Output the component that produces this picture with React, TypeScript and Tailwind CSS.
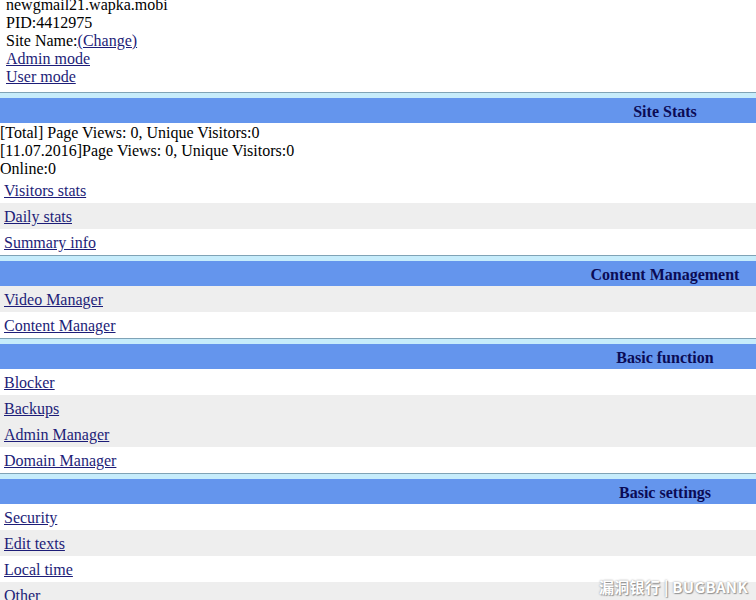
import React from 'react'

const serif = { fontFamily: '"Liberation Serif", "Times New Roman", serif' }

type Row = { label: string; gray?: boolean }

function Header({ title }: { title: string }) {
  return (
    <div>
      <div className="h-px bg-[#7fa3b6]" />
      <div className="h-[5px] bg-[#c6ecfb]" />
      <div className="h-[25px] bg-[#6495ed] flex items-center justify-end pt-[2px]">
        <div className="w-[182px] text-center font-bold text-[16px] text-[#0b0b55]">{title}</div>
      </div>
    </div>
  )
}

function Rows({ rows }: { rows: Row[] }) {
  return (
    <div>
      {rows.map((r) => (
        <div
          key={r.label}
          className={`h-[26px] flex items-center pl-1 pt-[2px] ${r.gray ? 'bg-[#eeeeee]' : 'bg-white'}`}
        >
          <a href="#" className="text-[#1d1d78] underline leading-[18px]">
            {r.label}
          </a>
        </div>
      ))}
    </div>
  )
}

export default function App() {
  return (
    <div className="relative w-[756px] h-[600px] overflow-hidden bg-white text-[16px] text-black" style={serif}>
      {/* site info */}
      <div className="-mt-[4px] mb-[6px] pl-[6px] leading-[18px]">
        <div>newgmail21.wapka.mobi</div>
        <div>PID:4412975</div>
        <div>
          Site Name:
          <a href="#" className="text-[#1d1d78] underline">(Change)</a>
        </div>
        <div>
          <a href="#" className="text-[#1d1d78] underline">Admin mode</a>
        </div>
        <div>
          <a href="#" className="text-[#1d1d78] underline">User mode</a>
        </div>
      </div>

      <Header title="Site Stats" />
      <div className="leading-[18px] pt-px -mb-px">
        <div>[Total] Page Views: 0, Unique Visitors:0</div>
        <div>[11.07.2016]Page Views: 0, Unique Visitors:0</div>
        <div>Online:0</div>
      </div>
      <Rows rows={[{ label: 'Visitors stats' }, { label: 'Daily stats', gray: true }, { label: 'Summary info' }]} />

      <Header title="Content Management" />
      <Rows rows={[{ label: 'Video Manager', gray: true }, { label: 'Content Manager' }]} />

      <Header title="Basic function" />
      <Rows
        rows={[
          { label: 'Blocker' },
          { label: 'Backups', gray: true },
          { label: 'Admin Manager', gray: true },
          { label: 'Domain Manager' },
        ]}
      />

      <Header title="Basic settings" />
      <Rows
        rows={[
          { label: 'Security' },
          { label: 'Edit texts', gray: true },
          { label: 'Local time' },
          { label: 'Other', gray: true },
        ]}
      />

      {/* watermark */}
      <div
        className="absolute right-[8px] top-[576px] text-[15px] font-bold text-white tracking-[0.3px] [text-shadow:0_0_2px_#8a8a8a,1px_1px_1px_#9a9a9a]"
        style={{ fontFamily: '"Noto Sans CJK SC", "Liberation Sans", sans-serif' }}
      >
        漏洞银行 | BUGBANK
      </div>
    </div>
  )
}
